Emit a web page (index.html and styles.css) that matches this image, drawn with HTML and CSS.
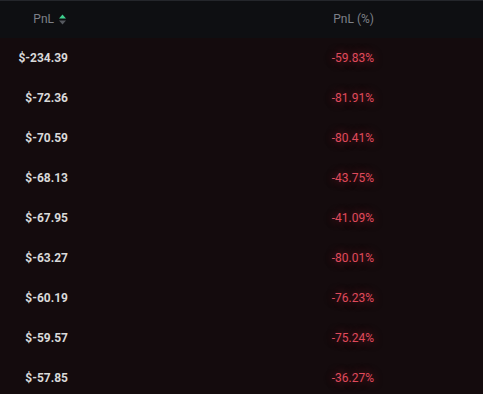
FILE: index.html
```html
<!DOCTYPE html>
<html>
<head>
<meta charset="utf-8">
<link rel="stylesheet" href="styles.css">
</head>
<body>
<div class="table">
  <div class="row head">
    <div class="c1">PnL <span class="sort"><svg width="7" height="11" viewBox="0 0 7 11"><path d="M3.5 0.5 L7 4.5 L0 4.5 Z" fill="#3ecf8e"/><path d="M0 6.5 L7 6.5 L3.5 10.5 Z" fill="#55585e"/></svg></span></div>
    <div class="c2">PnL (%)</div>
  </div>
  <div class="row"><div class="c1 v">$-234.39</div><div class="c2 r">-59.83%</div></div>
  <div class="row"><div class="c1 v">$-72.36</div><div class="c2 r">-81.91%</div></div>
  <div class="row"><div class="c1 v">$-70.59</div><div class="c2 r">-80.41%</div></div>
  <div class="row"><div class="c1 v">$-68.13</div><div class="c2 r">-43.75%</div></div>
  <div class="row"><div class="c1 v">$-67.95</div><div class="c2 r">-41.09%</div></div>
  <div class="row"><div class="c1 v">$-63.27</div><div class="c2 r">-80.01%</div></div>
  <div class="row"><div class="c1 v">$-60.19</div><div class="c2 r">-76.23%</div></div>
  <div class="row"><div class="c1 v">$-59.57</div><div class="c2 r">-75.24%</div></div>
  <div class="row"><div class="c1 v">$-57.85</div><div class="c2 r">-36.27%</div></div>
</div>
</body>
</html>
```
FILE: styles.css
```css
html, body {
  margin: 0;
  padding: 0;
  background: #140b0d;
  height: 100%;
  overflow: hidden;
}
.table {
  font-family: Roboto, "Liberation Sans", sans-serif;
  font-size: 12px;
}
.row {
  display: grid;
  grid-template-columns: 68px 306px 1fr;
  height: 40px;
  align-items: center;
}
.row.head {
  height: 36px;
  padding-bottom: 1px;
  background: #0e0f12;
  border-top: 1px solid #24262b;
  color: #7d8088;
}
.c1, .c2 {
  text-align: right;
  white-space: nowrap;
}
.head .c1 {
  margin-right: 2px;
  display: flex;
  justify-content: flex-end;
  align-items: center;
  gap: 5px;
}
.sort {
  display: flex;
}
.v {
  color: #d9d9d9;
  font-weight: 700;
}
.r {
  color: #e04a5c;
  text-shadow: 0 0 10px rgba(226, 60, 80, 0.55);
}
```
